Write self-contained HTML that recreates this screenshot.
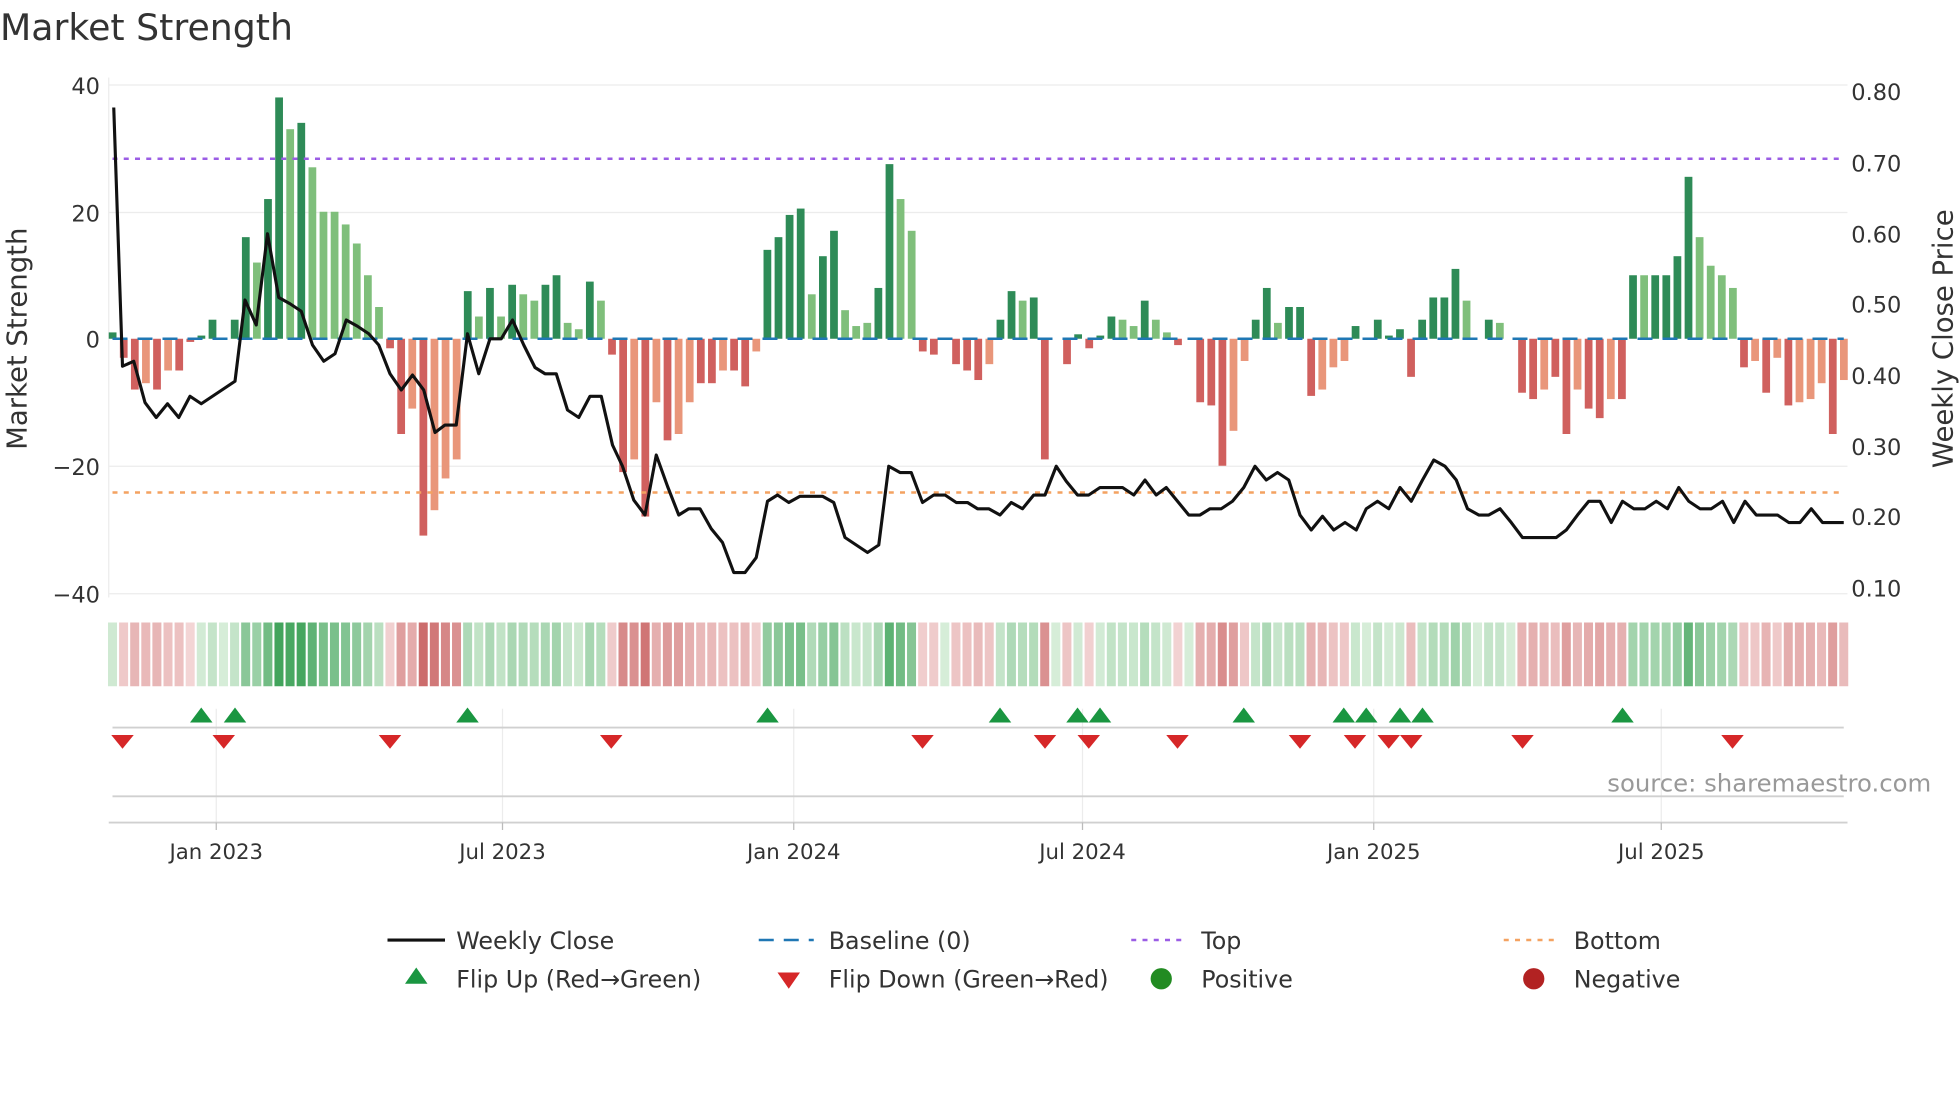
<!DOCTYPE html>
<html><head><meta charset="utf-8"><style>
html,body{margin:0;padding:0;background:#fff;}
svg{display:block;}
text{font-family:"DejaVu Sans","Liberation Sans",sans-serif;}
</style></head><body>
<svg id="s" width="1960" height="1102" viewBox="0 0 1568 881.6" xmlns="http://www.w3.org/2000/svg">
<rect width="1568" height="882" fill="#fff"/>
<text x="0" y="32" font-size="29" fill="#333">Market Strength</text>
<g stroke="#ececec" stroke-width="1">
<line x1="87" y1="68" x2="1478" y2="68"/><line x1="87" y1="170" x2="1478" y2="170"/>
<line x1="87" y1="373" x2="1478" y2="373"/><line x1="87" y1="475" x2="1478" y2="475"/>
<line x1="87" y1="62" x2="87" y2="478"/>
</g>
<g font-size="18" fill="#333" text-anchor="end">
<text x="80" y="75">40</text><text x="80" y="177">20</text><text x="80" y="278">0</text>
<text x="80" y="380">−20</text><text x="80" y="482">−40</text>
</g>
<g font-size="18" fill="#333">
<text x="1481" y="80">0.80</text><text x="1481" y="137">0.70</text><text x="1481" y="194">0.60</text>
<text x="1481" y="250">0.50</text><text x="1481" y="307">0.40</text><text x="1481" y="364">0.30</text>
<text x="1481" y="420">0.20</text><text x="1481" y="477">0.10</text>
</g>
<text transform="translate(21,271) rotate(-90)" font-size="22" fill="#333" text-anchor="middle">Market Strength</text>
<text transform="translate(1562,271) rotate(-90)" font-size="22" fill="#333" text-anchor="middle">Weekly Close Price</text>
<g id="bars"></g>
<line x1="90" y1="271" x2="1475" y2="271" stroke="#1f77b4" stroke-width="2" stroke-dasharray="12,8"/>
<line x1="90" y1="127" x2="1475" y2="127" stroke="#9b5de5" stroke-width="2" stroke-dasharray="4,5"/>
<line x1="90" y1="394" x2="1475" y2="394" stroke="#f4a261" stroke-width="2" stroke-dasharray="4,5"/>
<polyline id="price" fill="none" stroke="#111" stroke-width="2.5" stroke-linejoin="round"/>
<g id="strip"></g>
<g stroke="#ececec" stroke-width="1">
<line x1="173" y1="567" x2="173" y2="658"/><line x1="402" y1="567" x2="402" y2="658"/>
<line x1="635" y1="567" x2="635" y2="658"/><line x1="866" y1="567" x2="866" y2="658"/>
<line x1="1099" y1="567" x2="1099" y2="658"/><line x1="1329" y1="567" x2="1329" y2="658"/>
</g>
<line x1="90" y1="582" x2="1475" y2="582" stroke="#d0d0d0" stroke-width="1.5"/>
<line x1="90" y1="637" x2="1475" y2="637" stroke="#d0d0d0" stroke-width="1.5"/>
<line x1="87" y1="658" x2="1478" y2="658" stroke="#d0d0d0" stroke-width="1.5"/>
<g id="flips"></g>
<g stroke="#bbb" stroke-width="1">
<line x1="173" y1="658" x2="173" y2="664"/><line x1="402" y1="658" x2="402" y2="664"/>
<line x1="635" y1="658" x2="635" y2="664"/><line x1="866" y1="658" x2="866" y2="664"/>
<line x1="1099" y1="658" x2="1099" y2="664"/><line x1="1329" y1="658" x2="1329" y2="664"/>
</g>
<g font-size="17" fill="#333" text-anchor="middle">
<text x="173" y="687">Jan 2023</text><text x="402" y="687">Jul 2023</text><text x="635" y="687">Jan 2024</text>
<text x="866" y="687">Jul 2024</text><text x="1099" y="687">Jan 2025</text><text x="1329" y="687">Jul 2025</text>
</g>
<text x="1545" y="633" font-size="19.5" fill="#999" text-anchor="end">source: sharemaestro.com</text>
<g font-size="19" fill="#333">
<line x1="310" y1="752" x2="356" y2="752" stroke="#111" stroke-width="2.5"/>
<text x="365" y="759">Weekly Close</text>
<line x1="607" y1="752" x2="651" y2="752" stroke="#1f77b4" stroke-width="2" stroke-dasharray="12,8"/>
<text x="663" y="759">Baseline (0)</text>
<line x1="905" y1="752" x2="949" y2="752" stroke="#9b5de5" stroke-width="2" stroke-dasharray="4,5"/>
<text x="961" y="759">Top</text>
<line x1="1203" y1="752" x2="1247" y2="752" stroke="#f4a261" stroke-width="2" stroke-dasharray="4,5"/>
<text x="1259" y="759">Bottom</text>
<polygon points="324,787 342,787 333,774" fill="#1a9641"/>
<text x="365" y="790">Flip Up (Red→Green)</text>
<polygon points="622,778 640,778 631,791" fill="#d62728"/>
<text x="663" y="790">Flip Down (Green→Red)</text>
<circle cx="929" cy="783" r="8.5" fill="#228b22"/>
<text x="961" y="790">Positive</text>
<circle cx="1227" cy="783" r="8.5" fill="#b22222"/>
<text x="1259" y="790">Negative</text>
</g>
</svg>
<script>
var NS="http://www.w3.org/2000/svg";
function el(t,a,p){var e=document.createElementNS(NS,t);for(var k in a)e.setAttribute(k,a[k]);p.appendChild(e);return e;}
var D=[[1,'G'],[-3,'R'],[-8,'R'],[-7,'r'],[-8,'R'],[-5,'r'],[-5,'R'],[-0.5,'R'],[0.5,'G'],[3,'G'],[0,'G'],[3,'G'],[16,'G'],[12,'g'],[22,'G'],[38,'G'],[33,'g'],[34,'G'],[27,'g'],[20,'g'],[20,'g'],[18,'g'],[15,'g'],[10,'g'],[5,'g'],[-1.5,'R'],[-15,'R'],[-11,'r'],[-31,'R'],[-27,'r'],[-22,'r'],[-19,'r'],[7.5,'G'],[3.5,'g'],[8,'G'],[3.5,'g'],[8.5,'G'],[7,'g'],[6,'g'],[8.5,'G'],[10,'G'],[2.5,'g'],[1.5,'g'],[9,'G'],[6,'g'],[-2.5,'R'],[-21,'R'],[-19,'r'],[-28,'R'],[-10,'r'],[-16,'R'],[-15,'r'],[-10,'r'],[-7,'R'],[-7,'R'],[-5,'r'],[-5,'R'],[-7.5,'R'],[-2,'r'],[14,'G'],[16,'G'],[19.5,'G'],[20.5,'G'],[7,'g'],[13,'G'],[17,'G'],[4.5,'g'],[2,'g'],[2.5,'g'],[8,'G'],[27.5,'G'],[22,'g'],[17,'g'],[-2,'R'],[-2.5,'R'],[0,'R'],[-4,'R'],[-5,'R'],[-6.5,'R'],[-4,'r'],[3,'G'],[7.5,'G'],[6,'g'],[6.5,'G'],[-19,'R'],[0,'R'],[-4,'R'],[0.7,'G'],[-1.5,'R'],[0.5,'G'],[3.5,'G'],[3,'g'],[2,'g'],[6,'G'],[3,'g'],[1,'g'],[-1,'R'],[0,'R'],[-10,'R'],[-10.5,'R'],[-20,'R'],[-14.5,'r'],[-3.5,'r'],[3,'G'],[8,'G'],[2.5,'g'],[5,'G'],[5,'G'],[-9,'R'],[-8,'r'],[-4.5,'r'],[-3.5,'r'],[2,'G'],[0,'G'],[3,'G'],[0.5,'G'],[1.5,'G'],[-6,'R'],[3,'G'],[6.5,'G'],[6.5,'G'],[11,'G'],[6,'g'],[0,'g'],[3,'G'],[2.5,'g'],[0,'g'],[-8.5,'R'],[-9.5,'R'],[-8,'r'],[-6,'R'],[-15,'R'],[-8,'r'],[-11,'R'],[-12.5,'R'],[-9.5,'r'],[-9.5,'R'],[10,'G'],[10,'g'],[10,'G'],[10,'G'],[13,'G'],[25.5,'G'],[16,'g'],[11.5,'g'],[10,'g'],[8,'g'],[-4.5,'R'],[-3.5,'r'],[-8.5,'R'],[-3,'r'],[-10.5,'R'],[-10,'r'],[-9.5,'r'],[-7,'r'],[-15,'R'],[-6.5,'r']];
var C={G:'#2e8b57',g:'#7fbf7b',R:'#d0605e',r:'#e9967a'};
var n=D.length,step=1385/(n-1),bars=document.getElementById('bars'),strip=document.getElementById('strip');
function mix(a,b,t){var r=[];for(var i=0;i<3;i++)r.push(Math.round(a[i]+(b[i]-a[i])*t));return 'rgb('+r.join(',')+')';}
for(var i=0;i<n;i++){var x=90+i*step,v=D[i][0],h=Math.abs(v)*5.08;
 if(h>0.5)el('rect',{x:x-3,y:v>0?271-h:271,width:6.2,height:h,fill:C[D[i][1]]},bars);
 var t=Math.pow(Math.min(1,Math.abs(v)/35),0.85);
 var col=v>=0?mix([214,237,216],[66,164,92],t):mix([244,216,216],[200,96,96],t);
 el('rect',{x:x-3.6,y:498,width:7.2,height:51,fill:col},strip);}
var P=[[91,86],[98,293],[107,289],[116,322],[125,334],[134,323],[143,334],[152,317],[161,323],[170,317],[179,311],[188,305],[196,240],[205,260],[214,187],[223,238],[232,243],[241,249],[250,276],[259,289],[268,283],[277,256],[286,261],[295,267],[303,276],[312,299],[321,312],[330,300],[339,312],[348,346],[356,340],[365,340],[374,267],[383,299],[392,271],[401,271],[410,256],[419,276],[428,294],[436,299],[445,299],[454,328],[463,334],[472,317],[481,317],[490,356],[498,373],[507,400],[516,412],[525,364],[534,389],[543,412],[551,407],[560,407],[569,423],[578,434],[587,458],[596,458],[605,446],[614,401],[622,396],[631,402],[640,397],[649,397],[658,397],[667,402],[676,430],[685,436],[694,442],[703,436],[711,373],[720,378],[729,378],[738,402],[747,396],[756,396],[765,402],[774,402],[782,407],[791,407],[800,412],[809,402],[818,407],[827,396],[836,396],[845,373],[853,385],[862,396],[871,396],[880,390],[889,390],[898,390],[907,396],[916,384],[925,396],[933,390],[942,401],[951,412],[960,412],[968,407],[977,407],[986,401],[995,390],[1004,373],[1013,384],[1022,378],[1031,384],[1040,412],[1049,424],[1058,413],[1067,424],[1076,418],[1085,424],[1093,407],[1102,401],[1111,407],[1120,390],[1129,401],[1138,384],[1147,368],[1156,373],[1165,384],[1174,407],[1183,412],[1191,412],[1200,407],[1209,418],[1218,430],[1227,430],[1236,430],[1245,430],[1253,424],[1262,412],[1271,401],[1280,401],[1289,418],[1298,401],[1307,407],[1316,407],[1325,401],[1334,407],[1343,390],[1351,401],[1360,407],[1369,407],[1378,401],[1387,418],[1396,401],[1405,412],[1413,412],[1422,412],[1431,418],[1440,418],[1449,407],[1458,418],[1467,418],[1475,418]];
document.getElementById('price').setAttribute('points',P.map(function(p){return p.join(',');}).join(' '));
var fl=document.getElementById('flips');
[161,188,374,614,800,862,880,995,1075,1093,1120,1138,1298].forEach(function(x){el('polygon',{points:(x-9)+',578 '+(x+9)+',578 '+x+',566',fill:'#1a9641'},fl);});
[98,179,312,489,738,836,871,942,1040,1084,1111,1129,1218,1386].forEach(function(x){el('polygon',{points:(x-9)+',588 '+(x+9)+',588 '+x+',599',fill:'#d62728'},fl);});
</script>
</body></html>
